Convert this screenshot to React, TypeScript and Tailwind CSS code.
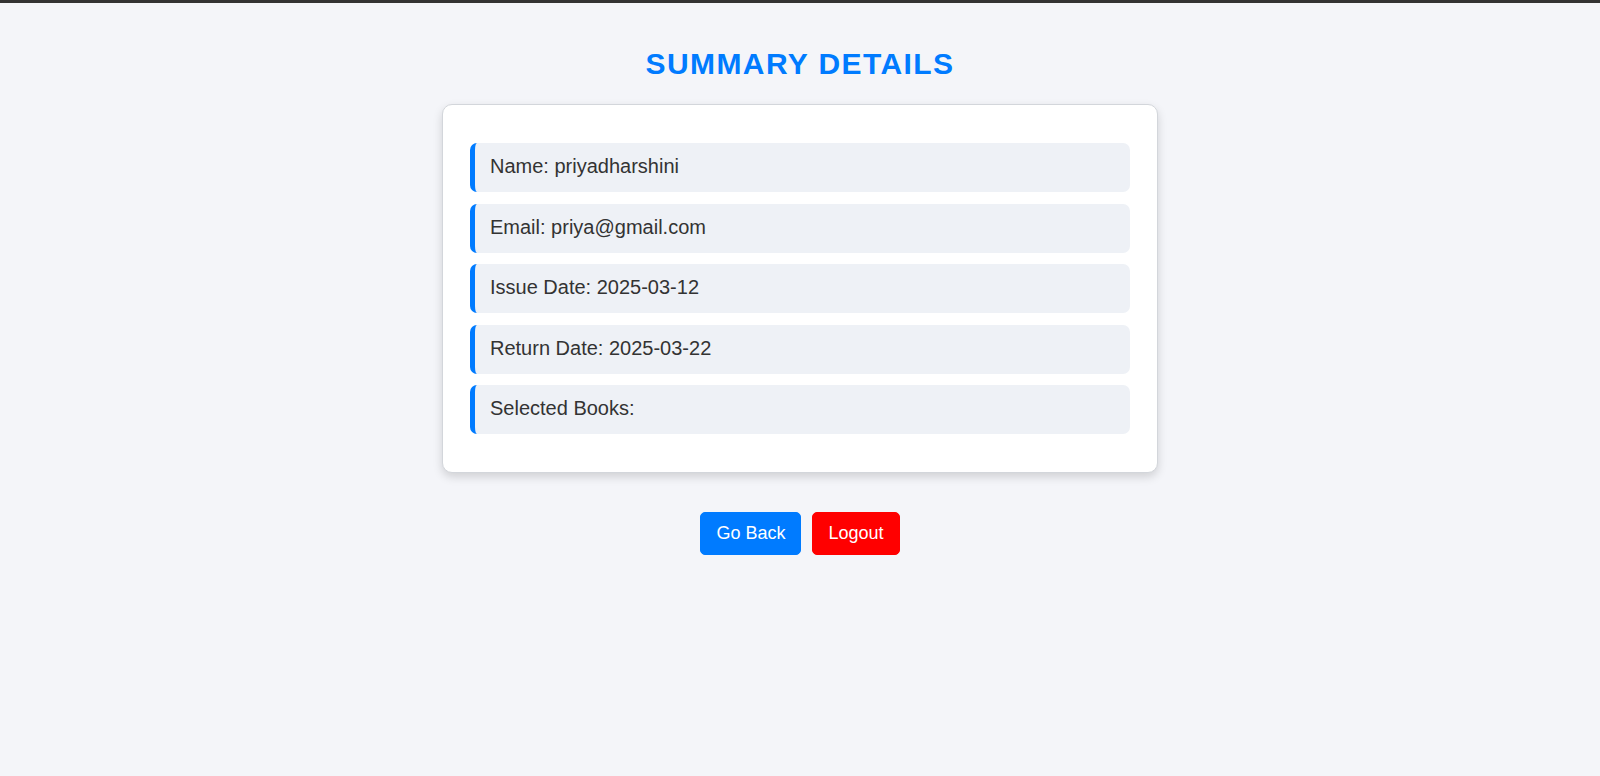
import React from "react";

const rows = [
  "Name: priyadharshini",
  "Email: priya@gmail.com",
  "Issue Date: 2025-03-12",
  "Return Date: 2025-03-22",
  "Selected Books:",
];

export default function App() {
  return (
    <div
      className="min-h-screen bg-[#f4f5f9] border-t-[3px] border-[#333333]"
      style={{ fontFamily: '"Liberation Sans", Arial, sans-serif' }}
    >
      <h1 className="pt-[42px] mb-[22px] text-center text-[30px] leading-[37px] font-bold tracking-[1.4px] text-[#007bff] uppercase">
        Summary Details
      </h1>
      <div className="mx-auto w-[716px] rounded-[10px] border border-[#d3d6db] bg-white px-[27px] py-[38px] shadow-[0_4px_10px_rgba(0,0,0,0.15)]">
        <div className="flex flex-col gap-[11.5px]">
          {rows.map((r) => (
            <div
              key={r}
              className="rounded-[7px] border-l-[5px] border-[#007bff] bg-[#eef1f6] pl-[15px] pt-[12px] pb-[14px] text-[20px] leading-[23px] text-[#333333]"
            >
              {r}
            </div>
          ))}
        </div>
      </div>
      <div className="mt-[39px] flex justify-center gap-[11px]">
        <button className="rounded-[5px] border border-[#007bff] bg-[#007bff] px-[15px] py-[10px] text-[18px] leading-[21px] text-white">
          Go Back
        </button>
        <button className="rounded-[5px] border border-[#ff0000] bg-[#ff0000] px-[15px] py-[10px] text-[18px] leading-[21px] text-white">
          Logout
        </button>
      </div>
    </div>
  );
}
